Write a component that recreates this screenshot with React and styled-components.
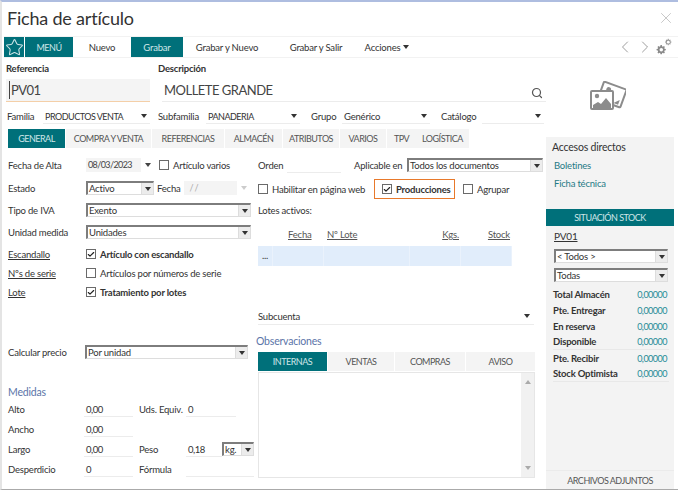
import React from 'react';
import styled, { createGlobalStyle, css } from 'styled-components';
import { Star, ChevronLeft, ChevronRight, Search, X, Check } from 'lucide-react';

const teal = '#00707a';

// the screenshot's font runs narrow, capitals especially
const caps = css`
    font-size: 9px;
    letter-spacing: -0.5px;
`;

const GlobalStyle = createGlobalStyle`
    html, body {
        margin: 0;
        padding: 0;
        background: #fff;
    }
    body {
        font-family: Lato, "Open Sans", sans-serif;
        font-size: 9.5px;
        letter-spacing: -0.2px;
        color: #333;
    }
`;

const Window = styled.div`
    width: 678px;
    height: 490px;
    box-sizing: border-box;
    border-top: 2px solid #aebde0;
    border-left: 2px solid #e4e4e4;
    border-bottom: 1px solid #aaa;
    display: flex;
    flex-direction: column;
    overflow: hidden;
`;

const TitleBar = styled.div`
    height: 34px;
    box-sizing: border-box;
    display: flex;
    align-items: center;
    justify-content: space-between;
    padding: 0 3px 2px 5px;
    flex: none;
    color: #b5b5b5;
`;

const Title = styled.h1`
    margin: 0;
    font-size: 18px;
    font-weight: 400;
    color: #333;
`;

const Toolbar = styled.div`
    height: 20px;
    display: flex;
    align-items: center;
    margin-left: 2px;
    border-top: 1px solid #f2f2f2;
    border-bottom: 1px solid #f2f2f2;
    flex: none;
`;

const StarButton = styled.div`
    width: 20px;
    height: 20px;
    background: ${teal};
    margin-right: 1px;
    display: flex;
    align-items: center;
    justify-content: center;
    color: #cfe6e8;
`;

const ToolButton = styled.div`
    width: ${(p) => p.$width}px;
    height: 20px;
    display: flex;
    align-items: center;
    justify-content: center;
    gap: 3px;
    color: ${(p) => (p.$active ? '#cfe6e8' : '#333')};
    background: ${(p) => (p.$active ? teal : 'transparent')};
`;

const MenuText = styled.span`
    ${caps}
`;

const ToolGroup = styled.div`
    margin-left: auto;
    display: flex;
    align-items: center;
    color: #8a8a8a;
    padding-right: 5px;
`;

const Content = styled.div`
    flex: 1;
    display: flex;
    min-height: 0;
`;

const Main = styled.div`
    width: 544px;
    flex: none;
    padding-left: 4px;
    box-sizing: border-box;
`;

const HeaderFields = styled.div`
    display: grid;
    grid-template-columns: 144px 1fr;
    column-gap: 8px;
    padding-top: 4px;
`;

const FieldTitle = styled.div`
    font-weight: 700;
    height: 17px;
    line-height: 14px;
`;

const RefInput = styled.div`
    height: 22px;
    background: #f4f4f4;
    border-bottom: 1px solid #f4cfa8;
    font-size: 13px;
    letter-spacing: -0.5px;
    line-height: 21px;
    padding-left: 3px;
    color: #444;
    display: flex;
    align-items: center;
`;

const TextCursor = styled.span`
    width: 1px;
    height: 18px;
    margin-right: 1px;
    background: #444;
    flex: none;
`;

const DescInput = styled.div`
    height: 22px;
    margin-left: 4px;
    border-bottom: 1px solid #ececec;
    font-size: 13px;
    letter-spacing: -0.5px;
    line-height: 21px;
    padding-left: 2px;
    display: flex;
    justify-content: space-between;
    align-items: center;
    color: #444;
    svg {
        color: #555;
        margin: 6px 3px 0 0;
    }
`;

const SelectRow = styled.div`
    display: flex;
    align-items: center;
    height: 15px;
    margin: 7px 0 0 1px;
`;

const SmallLabel = styled.div`
    width: ${(p) => p.$width}px;
    flex: none;
    white-space: nowrap;
`;

const FlatSelect = styled.div`
    width: ${(p) => p.$width}px;
    height: 15px;
    flex: none;
    margin-right: ${(p) => p.$gap || 0}px;
    border-bottom: 1px solid #ececec;
    display: flex;
    align-items: center;
    justify-content: space-between;
    padding: 0 2px;
    box-sizing: border-box;
    ${(p) => p.$caps && caps}
`;

const Caret = styled.span`
    width: 0;
    height: 0;
    flex: none;
    border-left: 3.5px solid transparent;
    border-right: 3.5px solid transparent;
    border-top: 4px solid ${(p) => p.$color || '#333'};
    margin-left: ${(p) => p.$left || 0}px;
    margin-right: ${(p) => p.$right || 0}px;
`;

const TabBar = styled.div`
    display: flex;
    gap: 1px;
    margin: 5px 0 0 2px;
    height: 19px;
`;

const Tab = styled.div`
    ${caps}
    width: ${(p) => p.$width}px;
    margin-right: ${(p) => (p.$flush ? -1 : 0)}px;
    display: flex;
    align-items: center;
    justify-content: center;
    color: ${(p) => (p.$active ? '#cfe6e8' : '#555')};
    background: ${(p) => (p.$active ? teal : '#f4f4f4')};
`;

const FormGrid = styled.div`
    display: flex;
    margin-top: 6px;
    padding-left: 2px;
`;

const LeftColumn = styled.div`
    width: 250px;
    flex: none;
    display: flex;
    flex-direction: column;
`;

const RightColumn = styled.div`
    width: 285px;
    flex: none;
    display: flex;
    flex-direction: column;
`;

const FormRow = styled.div`
    height: ${(p) => p.$height || 22}px;
    margin-top: ${(p) => p.$top || 0}px;
    display: flex;
    align-items: center;
    flex: none;
`;

const SubaccountRow = styled.div`
    width: 276px;
    height: 17px;
    box-sizing: border-box;
    margin-top: 42px;
    flex: none;
    border-bottom: 1px solid #ececec;
    display: flex;
    align-items: center;
    justify-content: space-between;
`;

const Label = styled.div`
    width: ${(p) => p.$width || 78}px;
    margin-left: ${(p) => p.$left || 0}px;
    flex: none;
    white-space: nowrap;
    text-decoration: ${(p) => (p.$link ? 'underline' : 'none')};
`;

const ComboBox = styled.div`
    width: ${(p) => p.$width}px;
    height: 14px;
    flex: none;
    box-sizing: border-box;
    border-top: 2px solid #7d7d7d;
    border-left: 2px solid #7d7d7d;
    border-right: 1px solid #ddd;
    border-bottom: 1px solid #ddd;
    display: flex;
    align-items: center;
    justify-content: space-between;
    padding-left: 1px;
    background: #fff;
`;

const ComboArrow = styled.span`
    width: 11px;
    align-self: stretch;
    background: #ececec;
    border-left: 1px solid #ddd;
    display: flex;
    align-items: center;
    justify-content: center;
`;

const DateBox = styled.div`
    width: ${(p) => p.$width}px;
    height: 14px;
    flex: none;
    background: #f4f4f4;
    font-size: 9px;
    letter-spacing: -0.6px;
    line-height: 13px;
    padding-left: 2px;
    box-sizing: border-box;
    color: ${(p) => (p.$muted ? '#aaa' : '#444')};
`;

const CheckLabel = styled.label`
    display: flex;
    align-items: center;
    gap: 4px;
    font-weight: ${(p) => (p.$bold ? 700 : 400)};
    white-space: nowrap;
    margin-left: ${(p) => p.$left || 0}px;
`;

const Box = styled.span`
    width: 10px;
    height: 10px;
    flex: none;
    box-sizing: border-box;
    border: 1.5px solid #6a6a6a;
    background: #fff;
    display: flex;
    align-items: center;
    justify-content: center;
    color: #222;
`;

const Highlight = styled.div`
    display: flex;
    align-items: center;
    height: 20px;
    width: 81px;
    flex: none;
    box-sizing: border-box;
    border: 1.5px solid #e8792b;
    padding-left: 7px;
    margin-left: 8px;
`;

const HabilitarSlot = styled.div`
    width: 108px;
    flex: none;
`;

const LineInput = styled.div`
    width: ${(p) => p.$width}px;
    height: 15px;
    flex: none;
    box-sizing: border-box;
    border-bottom: 1px solid #ececec;
    letter-spacing: -0.5px;
    line-height: 15px;
    padding-left: 2px;
`;

const SectionTitle = styled.div`
    color: #5b74a8;
    font-size: 10.5px;
    height: 15px;
    line-height: 15px;
    margin-top: ${(p) => p.$top}px;
    margin-left: ${(p) => p.$left || 0}px;
`;

const TableHead = styled.div`
    display: grid;
    grid-template-columns: 15px 51px 86px 51px 51px;
    width: 254px;
    height: 17px;
    margin-top: 11px;
`;

const HeadCell = styled.span`
    color: #555;
    text-decoration: underline;
    padding-left: ${(p) => p.$pad || 0}px;
    padding-right: ${(p) => (p.$right ? 2 : 0)}px;
    text-align: ${(p) => (p.$right ? 'right' : 'left')};
`;

const TableRow = styled.div`
    display: grid;
    grid-template-columns: 15px 51px 86px 51px 51px;
    width: 254px;
    height: 20px;
    background: #e1edfb;
    line-height: 20px;
    span {
        border-right: 1px solid #eaf2fc;
        padding-left: 4px;
    }
`;

const NoteTabs = styled.div`
    display: flex;
    gap: 1px;
    width: 277px;
    height: 19px;
    margin-top: 3px;
`;

const NoteTab = styled.div`
    ${caps}
    flex: ${(p) => p.$grow};
    display: flex;
    align-items: center;
    justify-content: center;
    color: ${(p) => (p.$active ? '#cfe6e8' : '#555')};
    background: ${(p) => (p.$active ? teal : '#f4f4f4')};
`;

const NoteBox = styled.div`
    width: 277px;
    height: 106px;
    margin-top: 1px;
    box-sizing: border-box;
    border: 1px solid #e6e6e6;
    display: flex;
    justify-content: flex-end;
`;

const NoteScroll = styled.div`
    width: 13px;
    background: #f1f1f1;
    display: flex;
    flex-direction: column;
    align-items: center;
    justify-content: space-between;
    padding: 7px 0;
    box-sizing: border-box;
`;

const ScrollUp = styled.span`
    border-left: 3.5px solid transparent;
    border-right: 3.5px solid transparent;
    border-bottom: 4px solid #aaa;
`;

const ScrollDown = styled.span`
    border-left: 3.5px solid transparent;
    border-right: 3.5px solid transparent;
    border-top: 4px solid #aaa;
`;

const Side = styled.div`
    width: 128px;
    flex: none;
    display: flex;
    flex-direction: column;
`;

const PhotoSlot = styled.div`
    height: 79px;
    display: flex;
    align-items: center;
    justify-content: center;
    flex: none;
    padding: 0 4px 3px 0;
    box-sizing: border-box;
`;

const SidePanel = styled.div`
    flex: 1;
    background: #f3f3f3;
    display: flex;
    flex-direction: column;
`;

const SideTitle = styled.div`
    font-size: 10.5px;
    padding: 3px 0 0 6px;
    height: 20px;
    box-sizing: border-box;
    line-height: 15px;
`;

const SideLink = styled.div`
    color: #1f7a86;
    padding-left: 8px;
    height: 18px;
    line-height: 18px;
`;

const StockHeader = styled.div`
    ${caps}
    height: 17px;
    background: ${teal};
    color: #cfe6e8;
    display: flex;
    align-items: center;
    justify-content: center;
    margin-top: 16px;
`;

const StockCode = styled.div`
    font-size: 10px;
    text-decoration: underline;
    padding-left: 8px;
    height: 20px;
    line-height: 20px;
    margin-bottom: 3px;
`;

const SideCombo = styled.div`
    margin: 0 0 5px 8px;
`;

const StockRows = styled.div`
    padding: 0 5px 0 7px;
    margin-top: -1px;
`;

const StockRow = styled.div`
    display: flex;
    justify-content: space-between;
    align-items: center;
    height: 16px;
    box-sizing: border-box;
    font-weight: 700;
    border-bottom: ${(p) => (p.$line ? '1px solid #e8e8e8' : 'none')};
    span {
        color: #1f8a96;
        font-size: 9px;
        letter-spacing: -0.5px;
        font-weight: 400;
        padding-right: 2px;
    }
`;

const AttachFooter = styled.div`
    ${caps}
    margin-top: auto;
    height: 18px;
    border-top: 1px solid #ebebeb;
    display: flex;
    align-items: center;
    justify-content: center;
    color: #555;
`;

function Combo({ width, children }) {
    return (
        <ComboBox $width={width}>
            {children}
            <ComboArrow><Caret /></ComboArrow>
        </ComboBox>
    );
}

function CheckItem({ checked, bold, left, children }) {
    return (
        <CheckLabel $bold={bold} $left={left}>
            <Box>{checked && <Check size={9} strokeWidth={3.5} />}</Box>
            {children}
        </CheckLabel>
    );
}

function GearsIcon() {
    const tooth = 'M12 2.5l1.6 0 .5 2.4 1.6.7 2.1-1.3 1.9 1.9-1.3 2.1.7 1.6 2.4.5v2.6l-2.4.5-.7 1.6 1.3 2.1-1.9 1.9-2.1-1.3-1.6.7-.5 2.4h-2.6l-.5-2.4-1.6-.7-2.1 1.3-1.9-1.9 1.3-2.1-.7-1.6-2.4-.5v-2.6l2.4-.5.7-1.6-1.3-2.1 1.9-1.9 2.1 1.3 1.6-.7.5-2.4z';
    return (
        <svg width="18" height="18" viewBox="0 0 34 34" fill="none">
            <g transform="translate(0 11) scale(.95)" fill="#8a8a8a">
                <path d={tooth} />
                <circle cx="12.5" cy="12" r="3.5" fill="#fff" />
            </g>
            <g transform="translate(17 0) scale(.65)" fill="#9a9a9a">
                <path d={tooth} />
                <circle cx="12.5" cy="12" r="4" fill="#fff" />
            </g>
        </svg>
    );
}

function PhotosIcon() {
    return (
        <svg width="36" height="30" viewBox="0 0 36 30" fill="none">
            <g transform="rotate(20 22 14)">
                <rect x="10" y="4" width="24" height="19" rx="1" stroke="#8c8c8c" strokeWidth="2" fill="#fff" />
                <circle cx="17" cy="10" r="2.4" fill="#8c8c8c" />
                <path d="M26 21l5-5v5z" fill="#8c8c8c" />
            </g>
            <rect x="1" y="10" width="22" height="18" rx="1" stroke="#8c8c8c" strokeWidth="2" fill="#fff" />
            <circle cx="7" cy="15" r="2.2" fill="#8c8c8c" />
            <path d="M3 27v-3l5-3 3 2 5-6 5 6v4z" fill="#8c8c8c" />
        </svg>
    );
}

const stock = [
    { label: 'Total Almacén' },
    { label: 'Pte. Entregar' },
    { label: 'En reserva' },
    { label: 'Disponible', line: true },
    { label: 'Pte. Recibir' },
    { label: 'Stock Optimista', line: true },
];

function App() {
    return (
        <Window>
            <GlobalStyle />
            <TitleBar>
                <Title>Ficha de artículo</Title>
                <X size={18} strokeWidth={1} />
            </TitleBar>
            <Toolbar>
                <StarButton><Star size={19} strokeWidth={1.3} /></StarButton>
                <ToolButton $width={48} $active><MenuText>MENÚ</MenuText></ToolButton>
                <ToolButton $width={58}>Nuevo</ToolButton>
                <ToolButton $width={52} $active>Grabar</ToolButton>
                <ToolButton $width={88}>Grabar y Nuevo</ToolButton>
                <ToolButton $width={90}>Grabar y Salir</ToolButton>
                <ToolButton $width={52}>Acciones<Caret /></ToolButton>
                <ToolGroup>
                    <ChevronLeft size={20} strokeWidth={1} />
                    <ChevronRight size={20} strokeWidth={1} />
                    <GearsIcon />
                </ToolGroup>
            </Toolbar>
            <Content>
                <Main>
                    <HeaderFields>
                        <div>
                            <FieldTitle>Referencia</FieldTitle>
                            <RefInput><TextCursor />PV01</RefInput>
                        </div>
                        <div>
                            <FieldTitle>Descripción</FieldTitle>
                            <DescInput>MOLLETE GRANDE<Search size={12} strokeWidth={2.4} /></DescInput>
                        </div>
                    </HeaderFields>
                    <SelectRow>
                        <SmallLabel $width={36}>Familia</SmallLabel>
                        <FlatSelect $width={107} $gap={8} $caps>PRODUCTOS VENTA<Caret $right={1} /></FlatSelect>
                        <SmallLabel $width={48}>Subfamilia</SmallLabel>
                        <FlatSelect $width={94} $gap={11} $caps>PANADERIA<Caret $right={1} /></FlatSelect>
                        <SmallLabel $width={31}>Grupo</SmallLabel>
                        <FlatSelect $width={88} $gap={11}>Genérico<Caret $right={1} /></FlatSelect>
                        <SmallLabel $width={41}>Catálogo</SmallLabel>
                        <FlatSelect $width={62}><span /><Caret $right={1} /></FlatSelect>
                    </SelectRow>
                    <TabBar>
                        <Tab $width={57} $active>GENERAL</Tab>
                        <Tab $width={85}>COMPRA Y VENTA</Tab>
                        <Tab $width={72}>REFERENCIAS</Tab>
                        <Tab $width={57}>ALMACÉN</Tab>
                        <Tab $width={56}>ATRIBUTOS</Tab>
                        <Tab $width={46}>VARIOS</Tab>
                        <Tab $width={29} $flush>TPV</Tab>
                        <Tab $width={53}>LOGÍSTICA</Tab>
                    </TabBar>
                    <FormGrid>
                        <LeftColumn>
                            <FormRow>
                                <Label>Fecha de Alta</Label>
                                <DateBox $width={55}>08/03/2023</DateBox>
                                <Caret $color="#444" $left={4} $right={8} />
                                <CheckItem>Artículo varios</CheckItem>
                            </FormRow>
                            <FormRow $height={24}>
                                <Label>Estado</Label>
                                <Combo width={68}>Activo</Combo>
                                <Label $width={27} $left={3}>Fecha</Label>
                                <DateBox $width={53} $muted>&nbsp;&nbsp;/ /</DateBox>
                                <Caret $color="#ccc" $left={4} />
                            </FormRow>
                            <FormRow $height={20}>
                                <Label>Tipo de IVA</Label>
                                <Combo width={165}>Exento</Combo>
                            </FormRow>
                            <FormRow $height={24}>
                                <Label>Unidad medida</Label>
                                <Combo width={165}>Unidades</Combo>
                            </FormRow>
                            <FormRow $height={20}>
                                <Label $link>Escandallo</Label>
                                <CheckItem checked bold>Artículo con escandallo</CheckItem>
                            </FormRow>
                            <FormRow $height={18}>
                                <Label $link>Nºs de serie</Label>
                                <CheckItem>Artículos por números de serie</CheckItem>
                            </FormRow>
                            <FormRow $height={20}>
                                <Label $link>Lote</Label>
                                <CheckItem checked bold>Tratamiento por lotes</CheckItem>
                            </FormRow>
                            <FormRow $top={39}>
                                <Label $width={77}>Calcular precio</Label>
                                <Combo width={163}>Por unidad</Combo>
                            </FormRow>
                            <SectionTitle $top={22}>Medidas</SectionTitle>
                            <FormRow $height={18}>
                                <Label $width={76}>Alto</Label>
                                <LineInput $width={49}>0,00</LineInput>
                                <Label $width={47} $left={6}>Uds. Equiv.</Label>
                                <LineInput $width={50}>0</LineInput>
                            </FormRow>
                            <FormRow>
                                <Label $width={76}>Ancho</Label>
                                <LineInput $width={49}>0,00</LineInput>
                            </FormRow>
                            <FormRow $height={18}>
                                <Label $width={76}>Largo</Label>
                                <LineInput $width={49}>0,00</LineInput>
                                <Label $width={47} $left={6}>Peso</Label>
                                <LineInput $width={36}>0,18</LineInput>
                                <ComboBox $width={32}>kg.<ComboArrow><Caret /></ComboArrow></ComboBox>
                            </FormRow>
                            <FormRow>
                                <Label $width={76}>Desperdicio</Label>
                                <LineInput $width={49}>0</LineInput>
                                <Label $width={47} $left={6}>Fórmula</Label>
                                <LineInput $width={68} />
                            </FormRow>
                        </LeftColumn>
                        <RightColumn>
                            <FormRow>
                                <Label $width={29}>Orden</Label>
                                <LineInput $width={54} />
                                <Label $width={53} $left={13}>Aplicable en</Label>
                                <Combo width={136}>Todos los documentos</Combo>
                            </FormRow>
                            <FormRow $height={26}>
                                <HabilitarSlot><CheckItem>Habilitar en página web</CheckItem></HabilitarSlot>
                                <Highlight><CheckItem checked bold>Producciones</CheckItem></Highlight>
                                <CheckItem left={8}>Agrupar</CheckItem>
                            </FormRow>
                            <FormRow $height={16}>Lotes activos:</FormRow>
                            <TableHead>
                                <span />
                                <HeadCell $pad={15}>Fecha</HeadCell>
                                <HeadCell $pad={3}>Nº Lote</HeadCell>
                                <HeadCell $right>Kgs.</HeadCell>
                                <HeadCell $right>Stock</HeadCell>
                            </TableHead>
                            <TableRow>
                                <span>...</span>
                                <span />
                                <span />
                                <span />
                                <span />
                            </TableRow>
                            <SubaccountRow>
                                Subcuenta
                                <Caret $right={4} />
                            </SubaccountRow>
                            <SectionTitle $top={9} $left={-2}>Observaciones</SectionTitle>
                            <NoteTabs>
                                <NoteTab $grow={69} $active>INTERNAS</NoteTab>
                                <NoteTab $grow={66}>VENTAS</NoteTab>
                                <NoteTab $grow={70}>COMPRAS</NoteTab>
                                <NoteTab $grow={69}>AVISO</NoteTab>
                            </NoteTabs>
                            <NoteBox>
                                <NoteScroll><ScrollUp /><ScrollDown /></NoteScroll>
                            </NoteBox>
                        </RightColumn>
                    </FormGrid>
                </Main>
                <Side>
                    <PhotoSlot><PhotosIcon /></PhotoSlot>
                    <SidePanel>
                        <SideTitle>Accesos directos</SideTitle>
                        <SideLink>Boletines</SideLink>
                        <SideLink>Ficha técnica</SideLink>
                        <StockHeader>SITUACIÓN STOCK</StockHeader>
                        <StockCode>PV01</StockCode>
                        <SideCombo><Combo width={114}>&lt; Todos &gt;</Combo></SideCombo>
                        <SideCombo><Combo width={114}>Todas</Combo></SideCombo>
                        <StockRows>
                            {stock.map((row) => (
                                <StockRow key={row.label} $line={row.line}>
                                    {row.label}
                                    <span>0,00000</span>
                                </StockRow>
                            ))}
                        </StockRows>
                        <AttachFooter>ARCHIVOS ADJUNTOS</AttachFooter>
                    </SidePanel>
                </Side>
            </Content>
        </Window>
    );
}

export default App;
